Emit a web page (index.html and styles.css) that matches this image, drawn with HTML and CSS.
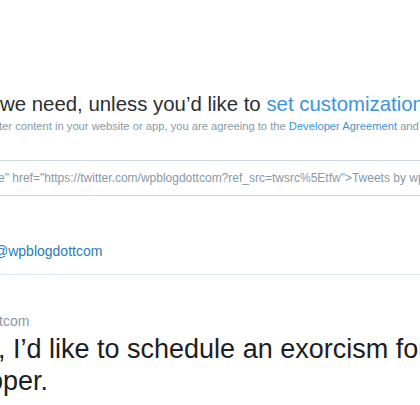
FILE: index.html
```html
<!DOCTYPE html>
<html>
<head>
<meta charset="utf-8">
<link rel="stylesheet" href="styles.css">
</head>
<body>
<div class="page">
  <h1 class="title">we need, unless you’d like to <a class="link">set customization options.</a></h1>
  <p class="legal">ter content in your website or app, you are agreeing to the <a class="link">Developer Agreement</a> and Developer Policy.</p>
  <div class="code">e" href="https://twitter.com/wpblogdottcom?ref_src=twsrc%5Etfw"&gt;Tweets by wpblogdottcom&lt;/a&gt;</div>
  <div class="preview">
    <div class="timeline-head"><a class="handle">@wpblogdottcom</a></div>
    <div class="tweet">
      <div class="author">tcom</div>
      <p class="tweet-text"><span class="line1">, I’d like to schedule an exorcism for my</span><span class="line2">oper.</span></p>
    </div>
  </div>
</div>
</body>
</html>
```
FILE: styles.css
```css
html, body {
  margin: 0;
  padding: 0;
  background: #fff;
  overflow: hidden;
}
.page {
  width: 420px;
  height: 405px;
  overflow: hidden;
  font-family: "Liberation Sans", Arial, sans-serif;
  white-space: nowrap;
}
.title {
  margin: 92px 0 0 0;
  font-size: 20.4px;
  line-height: 24px;
  font-weight: normal;
  color: #292f33;
}
.link {
  color: #3b94d9;
  text-decoration: none;
}
.legal {
  margin: 3px 0 0 -1px;
  font-size: 11.2px;
  line-height: 14px;
  color: #8899a6;
}
.code {
  margin: 27px 0 0 -20px;
  width: 480px;
  padding: 0 0 0 18px;
  height: 34px;
  line-height: 35px;
  border-top: 1px solid #ccd6dd;
  border-bottom: 1px solid #ccd6dd;
  font-size: 12px;
  color: #8899a6;
}
.timeline-head {
  margin-left: -6px;
  height: 79px;
  display: flex;
  align-items: flex-end;
  padding-bottom: 14px;
  box-sizing: border-box;
  border-bottom: 1px solid #e1e8ed;
  font-size: 14px;
}
.handle {
  color: #2b7bb9;
  line-height: 18px;
}
.tweet {
  padding-top: 37px;
}
.author {
  font-size: 14px;
  line-height: 18px;
  color: #8899a6;
  margin-left: -1px;
}
.tweet-text {
  margin: 3px 0 0 -2px;
  font-size: 27px;
  line-height: 32px;
  color: #1c2022;
}
.line1,
.line2 {
  display: block;
}
.line2 {
  margin-left: -10px;
}
```
